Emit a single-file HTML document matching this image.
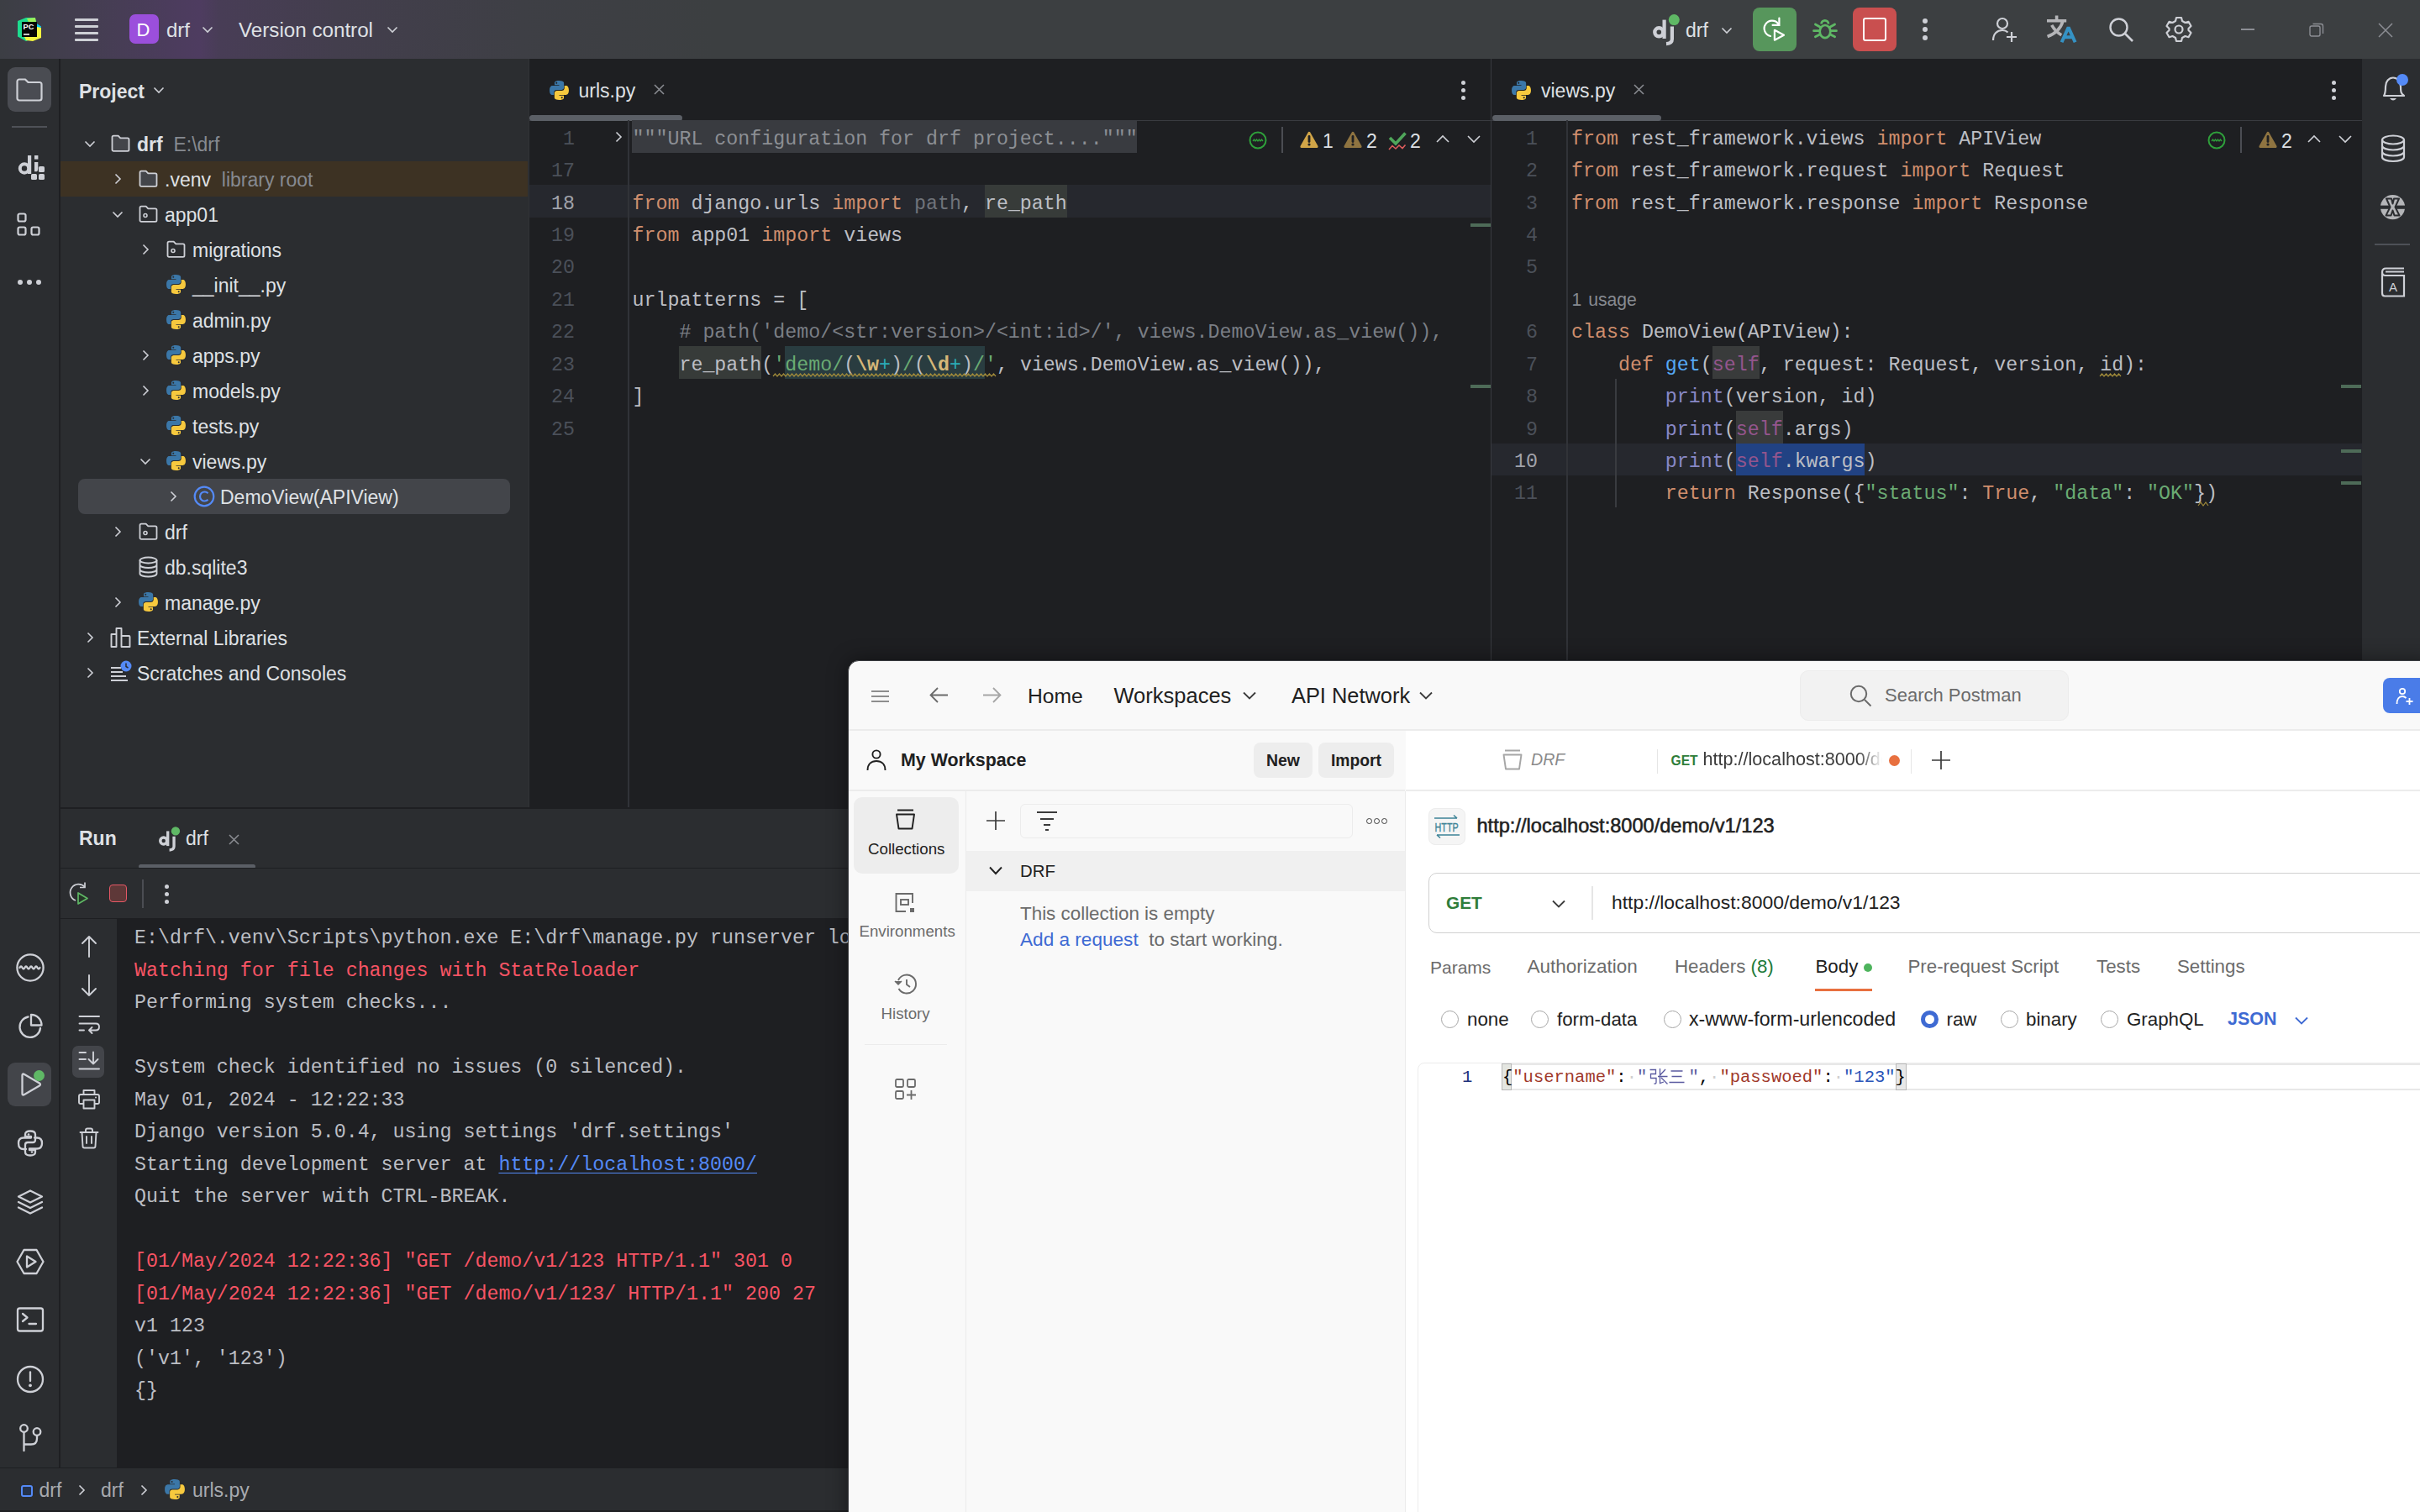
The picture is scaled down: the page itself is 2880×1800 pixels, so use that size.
<!DOCTYPE html><html><head><meta charset="utf-8"><style>
*{box-sizing:border-box;margin:0;padding:0}
html,body{width:2880px;height:1800px;overflow:hidden}
body{position:relative;background:#2b2d30;font-family:"Liberation Sans",sans-serif;color:#dfe1e5}
.a{position:absolute}
.t{position:absolute;white-space:pre;line-height:1}
.m{font-family:"Liberation Mono",monospace}
svg{position:absolute;overflow:visible}
.k{color:#cf8e6d}
.s{color:#6aab73}
.c{color:#7a7e85}
.n{color:#2aacb8}
.f{color:#56a8f5}
.b{color:#8888c6}
.sf{color:#94558d}
.g{color:#6f737a}
</style></head><body><svg width="0" height="0" style="position:absolute">
<defs>
<symbol id="py" viewBox="0 0 24 24">
<path fill="#3b77a8" d="M11.9 1C6.4 1 6.7 3.4 6.7 3.4V5.9h5.3v.8H4.6S1 6.3 1 11.9s3.1 5.4 3.1 5.4h1.9v-2.6s-.1-3.1 3.1-3.1h5.3s3 .05 3-2.9V3.8S17.9 1 11.9 1zM8.9 2.7a.95.95 0 1 1 0 1.9.95.95 0 0 1 0-1.9z"/>
<path fill="#f7c93e" d="M12.1 23c5.5 0 5.2-2.4 5.2-2.4v-2.5h-5.3v-.8h7.4s3.6.4 3.6-5.2-3.1-5.4-3.1-5.4h-1.9v2.6s.1 3.1-3.1 3.1H9.6s-3-.05-3 2.9v4.9S6.1 23 12.1 23zm3-1.7a.95.95 0 1 1 0-1.9.95.95 0 0 1 0 1.9z"/>
</symbol>
<symbol id="folder" viewBox="0 0 25 22">
<path d="M2.5 3.2c0-.9.7-1.6 1.6-1.6h5.6l2.6 2.8h8.6c.9 0 1.6.7 1.6 1.6v12.2c0 .9-.7 1.6-1.6 1.6H4.1c-.9 0-1.6-.7-1.6-1.6z" fill="#43454a" stroke="#ced0d6" stroke-width="1.8" stroke-linejoin="round"/>
</symbol>
<symbol id="pkg" viewBox="0 0 25 22">
<path d="M2.5 3.2c0-.9.7-1.6 1.6-1.6h5.6l2.6 2.8h8.6c.9 0 1.6.7 1.6 1.6v12.2c0 .9-.7 1.6-1.6 1.6H4.1c-.9 0-1.6-.7-1.6-1.6z" fill="none" stroke="#ced0d6" stroke-width="1.8" stroke-linejoin="round"/>
<circle cx="9" cy="12.5" r="2" fill="none" stroke="#ced0d6" stroke-width="1.6"/>
</symbol>
<symbol id="chr" viewBox="0 0 16 16"><path d="M5.5 2.5l5.5 5.5-5.5 5.5" fill="none" stroke="#ced0d6" stroke-width="1.6"/></symbol>
<symbol id="chd" viewBox="0 0 16 16"><path d="M2.5 5.5l5.5 5.5 5.5-5.5" fill="none" stroke="#ced0d6" stroke-width="1.6"/></symbol>
</defs></svg><div class="a" style="left:0px;top:0px;width:2880px;height:70px;background:linear-gradient(90deg,#3c3e44 0px,#433e4f 90px,#4b3c5c 200px,#4e3c60 238px,#483d56 262px,#433e4d 400px,#3e3f45 620px,#3c3f41 850px);"></div><svg class="a" style="left:15px;top:15px;width:40px;height:40px" viewBox="0 0 40 40">
<path d="M6 10 L16 6 L26.5 6 L28.5 12 L28.5 29 L16 34 L6 28.5 Z" fill="#1ddc8f"/>
<path d="M17 7 L27 6 L28.5 14 L20 14 Z" fill="#9cf05a"/>
<path d="M27 12 L34 16.5 L31 25 L27 25 Z" fill="#08c9f5"/>
<path d="M14 29 L29 17 L34 18 L34 30 L24 34 L16 33 Z" fill="#f2f53f"/>
<rect x="11" y="11" width="18" height="18" fill="#050505"/>
<text x="12.6" y="20.3" font-family="Liberation Sans" font-weight="bold" font-size="9.2" fill="#fff">PC</text>
<rect x="13" y="25" width="7" height="1.8" fill="#ddd"/>
</svg><div class="a" style="left:89px;top:22px;width:28px;height:2.6px;background:#ced0d6;border-radius:1px"></div><div class="a" style="left:89px;top:30px;width:28px;height:2.6px;background:#ced0d6;border-radius:1px"></div><div class="a" style="left:89px;top:38px;width:28px;height:2.6px;background:#ced0d6;border-radius:1px"></div><div class="a" style="left:89px;top:46px;width:28px;height:2.6px;background:#ced0d6;border-radius:1px"></div><div class="a" style="left:154px;top:17px;width:35px;height:35px;background:#9b4fdc;border-radius:7px"></div><div class="t" style="left:162.5px;top:25.38px;font-size:22px;color:#ffffff;">D</div><div class="t" style="left:198px;top:23.68px;font-size:24px;color:#dfe1e5;">drf</div><svg class="a" style="left:239px;top:27px;width:16px;height:16px" ><use href="#chd"/></svg><div class="t" style="left:284px;top:23.51px;font-size:24.2px;color:#dfe1e5;">Version control</div><svg class="a" style="left:459px;top:27px;width:16px;height:16px" ><use href="#chd"/></svg><svg class="a" style="left:1962px;top:18px;width:38.0px;height:38.0px" viewBox="0 0 38 38">
<circle cx="12.3" cy="20.3" r="5" fill="none" stroke="#ced0d6" stroke-width="4.4"/>
<rect x="16.5" y="5.6" width="4.2" height="22.4" fill="#ced0d6"/>
<path d="M27.9 13.5 V28.5 Q27.9 33.8 21 34.2" fill="none" stroke="#ced0d6" stroke-width="4.2"/>
<circle cx="30.3" cy="5.6" r="6.5" fill="#5fb865"/>
</svg><div class="t" style="left:2006px;top:24.53px;font-size:23px;color:#dfe1e5;">drf</div><svg class="a" style="left:2047px;top:28px;width:16px;height:16px" ><use href="#chd"/></svg><div class="a" style="left:2086px;top:9px;width:52px;height:52px;background:#57965c;border-radius:8px"></div><svg class="a" style="left:2097px;top:20px;width:30px;height:30px" viewBox="0 0 30 30">
<path d="M19.5 8.5 A9.3 9.3 0 1 0 10 23" fill="none" stroke="#fff" stroke-width="2.2" stroke-linecap="round"/>
<path d="M20.4 1.5 V9.9 H12.6" fill="none" stroke="#fff" stroke-width="2.2" stroke-linecap="round"/>
<path d="M14.9 15.8 V27.7 L26 21.8 Z" fill="none" stroke="#fff" stroke-width="2.2" stroke-linejoin="round"/>
</svg><svg class="a" style="left:2157px;top:20px;width:30px;height:30px" viewBox="0 0 30 30">
<path d="M10.6 8.5 A4.2 4.2 0 0 1 19 8.5" fill="none" stroke="#5fb865" stroke-width="2.7"/>
<ellipse cx="15" cy="17.6" rx="6.3" ry="7.6" fill="none" stroke="#5fb865" stroke-width="2.7"/>
<path d="M3.4 9 L8.8 12 M26.6 9 L21.2 12 M1.5 16.7 H8.5 M28.5 16.7 H21.5 M3.4 23.8 L8.8 21 M26.6 23.8 L21.2 21" stroke="#5fb865" stroke-width="2.7" stroke-linecap="round" fill="none"/>
</svg><div class="a" style="left:2205px;top:9px;width:52px;height:52px;background:#c94f4f;border-radius:8px"></div><div class="a" style="left:2217px;top:21px;width:28px;height:28px;background:transparent;border:2.6px solid #fff;border-radius:3px"></div><div class="a" style="left:2288px;top:22px;width:6px;height:6px;border-radius:50%;background:#ced0d6"></div><div class="a" style="left:2288px;top:32px;width:6px;height:6px;border-radius:50%;background:#ced0d6"></div><div class="a" style="left:2288px;top:42px;width:6px;height:6px;border-radius:50%;background:#ced0d6"></div><svg class="a" style="left:2370px;top:19px;width:32px;height:32px" viewBox="0 0 32 32">
<circle cx="13" cy="9" r="6" fill="none" stroke="#ced0d6" stroke-width="2.2"/>
<path d="M2 29 C2 21 7 17 13 17 C16 17 18 18 19.5 19.5" fill="none" stroke="#ced0d6" stroke-width="2.2"/>
<path d="M24 19 V31 M18 25 H30" stroke="#ced0d6" stroke-width="2.2"/>
</svg><svg class="a" style="left:2435px;top:18px;width:38px;height:34px" viewBox="0 0 38 34">
<path d="M12.6 0.5 V7 M1 6.8 H24.2 M20 7 Q16.5 20 1.6 25.5 M6.7 11.9 Q11 19.5 18.3 23.8" fill="none" stroke="#b4b5b8" stroke-width="3.6"/>
<path d="M18.6 32.3 L26.6 14.6 L34.6 32.3 M21.5 26.2 H31.6" fill="none" stroke="#3592c4" stroke-width="4" stroke-linejoin="bevel"/>
</svg><svg class="a" style="left:2509px;top:20px;width:32px;height:32px" viewBox="0 0 32 32">
<circle cx="12.5" cy="12.5" r="10" fill="none" stroke="#ced0d6" stroke-width="2.4"/>
<path d="M20 20 L29 29" stroke="#ced0d6" stroke-width="2.6"/>
</svg><svg class="a" style="left:2577px;top:19px;width:32px;height:32px" viewBox="0 0 32 32">
<path d="M13 2 H19 L20 6 L23.5 8 L27.5 6.8 L30.5 12 L27.5 15 V17 L30.5 20 L27.5 25.2 L23.5 24 L20 26 L19 30 H13 L12 26 L8.5 24 L4.5 25.2 L1.5 20 L4.5 17 V15 L1.5 12 L4.5 6.8 L8.5 8 L12 6 Z" fill="none" stroke="#ced0d6" stroke-width="2.2" stroke-linejoin="round"/>
<circle cx="16" cy="16" r="4.5" fill="none" stroke="#ced0d6" stroke-width="2.2"/>
</svg><div class="a" style="left:2667px;top:34px;width:16px;height:1.5px;background:#8c8e94;"></div><svg class="a" style="left:2748px;top:27px;width:18px;height:18px" viewBox="0 0 18 18">
<rect x="1" y="4" width="12" height="12" rx="2" fill="none" stroke="#8c8e94" stroke-width="1.4"/>
<path d="M4.5 1.5 H14 Q16.5 1.5 16.5 4 V13" fill="none" stroke="#8c8e94" stroke-width="1.4"/>
</svg><svg class="a" style="left:2830px;top:27px;width:18px;height:18px" viewBox="0 0 18 18">
<path d="M1 1 L17 17 M17 1 L1 17" stroke="#8c8e94" stroke-width="1.5"/></svg><div class="a" style="left:0px;top:70px;width:70px;height:1677px;background:#2b2d30;"></div><div class="a" style="left:70px;top:70px;width:2px;height:1677px;background:#1e1f22;"></div><div class="a" style="left:9px;top:80px;width:52px;height:53px;background:#4a4c52;border-radius:9px"></div><svg class="a" style="left:19px;top:93px;width:32px;height:28px" viewBox="0 0 32 28">
<path d="M1.5 4 C1.5 2.5 2.5 1.5 4 1.5 H11 L14.5 5 H28 C29.5 5 30.5 6 30.5 7.5 V24 C30.5 25.5 29.5 26.5 28 26.5 H4 C2.5 26.5 1.5 25.5 1.5 24 Z" fill="none" stroke="#ced0d6" stroke-width="2.2" stroke-linejoin="round"/>
</svg><div class="a" style="left:14px;top:150px;width:42px;height:2px;background:#4e5157;"></div><svg class="a" style="left:20px;top:180px;width:36px;height:36px" viewBox="0 0 36 36">
<circle cx="9" cy="20.5" r="5.2" fill="none" stroke="#ced0d6" stroke-width="4"/>
<rect x="13" y="5" width="4.2" height="22" fill="#ced0d6"/>
<rect x="21" y="5" width="4.4" height="4.6" fill="#ced0d6"/>
<path d="M21 13 H25.3 V20 Q25 24.3 23.5 24.3 H21 Z" fill="#ced0d6"/>
<rect x="26" y="18" width="7" height="7" rx="1.6" fill="#ced0d6"/>
<rect x="17" y="27" width="7" height="7" rx="1.6" fill="#ced0d6"/>
<rect x="26" y="27" width="7" height="7" rx="1.6" fill="#ced0d6"/>
</svg><svg class="a" style="left:20px;top:253px;width:32px;height:32px" viewBox="0 0 32 32">
<rect x="1.5" y="1.5" width="9" height="9" rx="2" fill="none" stroke="#ced0d6" stroke-width="2.2"/>
<rect x="1.5" y="17.5" width="9" height="9" rx="2" fill="none" stroke="#ced0d6" stroke-width="2.2"/>
<rect x="17.5" y="17.5" width="9" height="9" rx="2" fill="none" stroke="#ced0d6" stroke-width="2.2"/>
</svg><div class="a" style="left:21px;top:333px;width:6px;height:6px;border-radius:50%;background:#ced0d6"></div><div class="a" style="left:32px;top:333px;width:6px;height:6px;border-radius:50%;background:#ced0d6"></div><div class="a" style="left:43px;top:333px;width:6px;height:6px;border-radius:50%;background:#ced0d6"></div><svg class="a" style="left:18.5px;top:1134.5px;width:34px;height:34px" viewBox="0 0 34 34"><circle cx="17" cy="17" r="15.6" fill="none" stroke="#ced0d6" stroke-width="2.3" stroke-linecap="round" stroke-linejoin="round"/><path d="M4.5 17 q1.5 -3 3 0 t3 0 t3 0 t3 0 t3 0 t3 0 t3 0 t3 0" fill="none" stroke="#ced0d6" stroke-width="2.3" stroke-linecap="round" stroke-linejoin="round" stroke-width="1.9"/></svg><svg class="a" style="left:18.5px;top:1204.5px;width:34px;height:34px" viewBox="0 0 34 34"><path d="M14.5 5.5 A12.3 12.3 0 1 0 29 19" fill="none" stroke="#ced0d6" stroke-width="2.3" stroke-linecap="round" stroke-linejoin="round"/><path d="M18 3 A12.5 12.5 0 0 1 30.5 15.5 H18 Z" fill="none" stroke="#ced0d6" stroke-width="2.3" stroke-linecap="round" stroke-linejoin="round"/></svg><div class="a" style="left:9px;top:1265px;width:52px;height:52px;background:#43454a;border-radius:9px"></div><svg class="a" style="left:18.5px;top:1274px;width:34px;height:34px" viewBox="0 0 34 34"><path d="M7.5 6 Q7.5 3.5 10 5 L28 15.5 Q30 17 28 18.5 L10 29 Q7.5 30.5 7.5 28 Z" fill="none" stroke="#ced0d6" stroke-width="2.3" stroke-linecap="round" stroke-linejoin="round"/></svg><div class="a" style="left:40px;top:1273.5px;width:13px;height:13px;border-radius:50%;background:#5fb865;border:0"></div><svg class="a" style="left:18.5px;top:1344px;width:34px;height:34px" viewBox="0 0 34 34"><path d="M12 24 H9 Q3 24 3 17 Q3 10.5 9 10.5 H18 V9 H11 V6.5 Q11 2.5 17 2.5 Q23 2.5 23 6.5 V13 Q23 16 20 16 H14 Q11 16 11 19 V27.5 Q11 31.5 17 31.5 Q23 31.5 23 27.5 V25 H16 V23.5 H25 Q31 23.5 31 17 Q31 10.5 25 10.5 H22" fill="none" stroke="#ced0d6" stroke-width="2.3" stroke-linecap="round" stroke-linejoin="round" stroke-width="2.1"/><circle cx="15" cy="6.5" r="1.3" fill="#ced0d6"/><circle cx="19" cy="27.5" r="1.3" fill="#ced0d6"/></svg><svg class="a" style="left:18.5px;top:1414px;width:34px;height:34px" viewBox="0 0 34 34"><path d="M17 3.5 L31 10.5 L17 17.5 L3 10.5 Z" fill="none" stroke="#ced0d6" stroke-width="2.3" stroke-linecap="round" stroke-linejoin="round"/><path d="M3 17 L17 24 L31 17 M3 23.5 L17 30.5 L31 23.5" fill="none" stroke="#ced0d6" stroke-width="2.3" stroke-linecap="round" stroke-linejoin="round"/></svg><svg class="a" style="left:18.5px;top:1484.5px;width:34px;height:34px" viewBox="0 0 34 34"><path d="M9.5 3 H24.5 L32.5 17 L24.5 31 H9.5 L1.5 17 Z" fill="none" stroke="#ced0d6" stroke-width="2.3" stroke-linecap="round" stroke-linejoin="round"/><path d="M13 10.5 V23.5 L23.5 17 Z" fill="none" stroke="#ced0d6" stroke-width="2.3" stroke-linecap="round" stroke-linejoin="round"/></svg><svg class="a" style="left:18.5px;top:1554px;width:34px;height:34px" viewBox="0 0 34 34"><rect x="2" y="3.5" width="30" height="27" rx="2.5" fill="none" stroke="#ced0d6" stroke-width="2.3" stroke-linecap="round" stroke-linejoin="round"/><path d="M8 10 L13.5 14.5 L8 19 M15.5 22 H24" fill="none" stroke="#ced0d6" stroke-width="2.3" stroke-linecap="round" stroke-linejoin="round"/></svg><svg class="a" style="left:18.5px;top:1624.5px;width:34px;height:34px" viewBox="0 0 34 34"><circle cx="17" cy="17" r="15" fill="none" stroke="#ced0d6" stroke-width="2.3" stroke-linecap="round" stroke-linejoin="round"/><path d="M17 8.5 V19" fill="none" stroke="#ced0d6" stroke-width="2.3" stroke-linecap="round" stroke-linejoin="round" stroke-width="3"/><circle cx="17" cy="24.3" r="1.9" fill="#ced0d6"/></svg><svg class="a" style="left:18.5px;top:1694.5px;width:34px;height:34px" viewBox="0 0 34 34"><circle cx="9.5" cy="5.5" r="4.3" fill="none" stroke="#ced0d6" stroke-width="2.3" stroke-linecap="round" stroke-linejoin="round"/><circle cx="25" cy="9.5" r="4.3" fill="none" stroke="#ced0d6" stroke-width="2.3" stroke-linecap="round" stroke-linejoin="round"/><path d="M9.5 10 V32 M9.5 24.5 H18 Q25 24.5 25 17.5 V14" fill="none" stroke="#ced0d6" stroke-width="2.3" stroke-linecap="round" stroke-linejoin="round"/></svg><div class="a" style="left:72px;top:70px;width:557px;height:891px;background:#2b2d30;"></div><div class="a" style="left:629px;top:70px;width:1px;height:891px;background:#313336;"></div><div class="t" style="left:94px;top:97.53px;font-size:23px;color:#dfe1e5;font-weight:bold;">Project</div><svg class="a" style="left:181px;top:99px;width:16px;height:16px" ><use href="#chd"/></svg><svg class="a" style="left:99px;top:163px;width:16px;height:16px" ><use href="#chd"/></svg><svg class="a" style="left:131px;top:160px;width:25px;height:22px" ><use href="#folder"/></svg><div class="t" style="left:163px;top:160.53px;font-size:23px;color:#dfe1e5;"><b>drf</b>  <span style="color:#868a91">E:\drf</span></div><div class="a" style="left:72px;top:192px;width:556px;height:42px;background:#3d3223;"></div><svg class="a" style="left:132px;top:205px;width:16px;height:16px" ><use href="#chr"/></svg><svg class="a" style="left:164px;top:202px;width:25px;height:22px" ><use href="#folder"/></svg><div class="t" style="left:196px;top:202.53px;font-size:23px;color:#dfe1e5;">.venv  <span style="color:#868a91">library root</span></div><svg class="a" style="left:132px;top:247px;width:16px;height:16px" ><use href="#chd"/></svg><svg class="a" style="left:164px;top:244px;width:25px;height:22px" ><use href="#pkg"/></svg><div class="t" style="left:196px;top:244.53px;font-size:23px;color:#dfe1e5;">app01</div><svg class="a" style="left:165px;top:289px;width:16px;height:16px" ><use href="#chr"/></svg><svg class="a" style="left:197px;top:286px;width:25px;height:22px" ><use href="#pkg"/></svg><div class="t" style="left:229px;top:286.53px;font-size:23px;color:#dfe1e5;">migrations</div><svg class="a" style="left:197px;top:326px;width:25px;height:25px" ><use href="#py"/></svg><div class="t" style="left:229px;top:328.53px;font-size:23px;color:#dfe1e5;">__init__.py</div><svg class="a" style="left:197px;top:368px;width:25px;height:25px" ><use href="#py"/></svg><div class="t" style="left:229px;top:370.53px;font-size:23px;color:#dfe1e5;">admin.py</div><svg class="a" style="left:165px;top:415px;width:16px;height:16px" ><use href="#chr"/></svg><svg class="a" style="left:197px;top:410px;width:25px;height:25px" ><use href="#py"/></svg><div class="t" style="left:229px;top:412.53px;font-size:23px;color:#dfe1e5;">apps.py</div><svg class="a" style="left:165px;top:457px;width:16px;height:16px" ><use href="#chr"/></svg><svg class="a" style="left:197px;top:452px;width:25px;height:25px" ><use href="#py"/></svg><div class="t" style="left:229px;top:454.53px;font-size:23px;color:#dfe1e5;">models.py</div><svg class="a" style="left:197px;top:494px;width:25px;height:25px" ><use href="#py"/></svg><div class="t" style="left:229px;top:496.53px;font-size:23px;color:#dfe1e5;">tests.py</div><svg class="a" style="left:165px;top:541px;width:16px;height:16px" ><use href="#chd"/></svg><svg class="a" style="left:197px;top:536px;width:25px;height:25px" ><use href="#py"/></svg><div class="t" style="left:229px;top:538.53px;font-size:23px;color:#dfe1e5;">views.py</div><div class="a" style="left:93px;top:570px;width:514px;height:42px;background:#43454a;border-radius:8px"></div><svg class="a" style="left:198px;top:583px;width:16px;height:16px" ><use href="#chr"/></svg><svg class="a" style="left:230px;top:578px;width:26px;height:26px" viewBox="0 0 26 26"><circle cx="13" cy="13" r="11.3" fill="none" stroke="#548af7" stroke-width="2.2"/><path d="M17.5 9.2 A5.5 5.5 0 1 0 17.5 16.8" fill="none" stroke="#548af7" stroke-width="2.2"/></svg><div class="t" style="left:262px;top:580.53px;font-size:23px;color:#dfe1e5;">DemoView(APIView)</div><svg class="a" style="left:132px;top:625px;width:16px;height:16px" ><use href="#chr"/></svg><svg class="a" style="left:164px;top:622px;width:25px;height:22px" ><use href="#pkg"/></svg><div class="t" style="left:196px;top:622.53px;font-size:23px;color:#dfe1e5;">drf</div><svg class="a" style="left:164px;top:662px;width:25px;height:26px" viewBox="0 0 25 26"><ellipse cx="12.5" cy="5" rx="10" ry="3.5" fill="none" stroke="#ced0d6" stroke-width="1.9"/><path d="M2.5 5 V21 C2.5 23 7 24.5 12.5 24.5 S22.5 23 22.5 21 V5 M2.5 10.5 C2.5 12.5 7 14 12.5 14 S22.5 12.5 22.5 10.5 M2.5 16 C2.5 18 7 19.5 12.5 19.5 S22.5 18 22.5 16" fill="none" stroke="#ced0d6" stroke-width="1.9"/></svg><div class="t" style="left:196px;top:664.53px;font-size:23px;color:#dfe1e5;">db.sqlite3</div><svg class="a" style="left:132px;top:709px;width:16px;height:16px" ><use href="#chr"/></svg><svg class="a" style="left:164px;top:704px;width:25px;height:25px" ><use href="#py"/></svg><div class="t" style="left:196px;top:706.53px;font-size:23px;color:#dfe1e5;">manage.py</div><svg class="a" style="left:99px;top:751px;width:16px;height:16px" ><use href="#chr"/></svg><svg class="a" style="left:131px;top:746px;width:25px;height:26px" viewBox="0 0 25 26"><path d="M1.5 24 V9 H7.5 V24 Z M7.5 24 V2 H13.5 V24 M13.5 24 V11 H22.5 Q23.5 11 23.5 12 V24 Z" fill="none" stroke="#ced0d6" stroke-width="1.9" stroke-linejoin="round"/></svg><div class="t" style="left:163px;top:748.53px;font-size:23px;color:#dfe1e5;">External Libraries</div><svg class="a" style="left:99px;top:793px;width:16px;height:16px" ><use href="#chr"/></svg><svg class="a" style="left:131px;top:786px;width:27px;height:28px" viewBox="0 0 27 28"><path d="M1 9 H13 M1 14 H15 M1 19 H19 M1 24 H21" stroke="#ced0d6" stroke-width="1.9"/><circle cx="19" cy="7" r="6.5" fill="#548af7"/><path d="M19 3.5 V7.5 L21.5 9" stroke="#2b2d30" stroke-width="1.5" fill="none"/></svg><div class="t" style="left:163px;top:790.53px;font-size:23px;color:#dfe1e5;">Scratches and Consoles</div><div class="a" style="left:630px;top:70px;width:1144px;height:891px;background:#1e1f22;"></div><div class="a" style="left:1774px;top:70px;width:1px;height:891px;background:#393b40;"></div><div class="a" style="left:630px;top:143px;width:1144px;height:1px;background:#393b40;"></div><svg class="a" style="left:653px;top:95px;width:25px;height:25px" ><use href="#py"/></svg><div class="t" style="left:688.5px;top:96.53px;font-size:23px;color:#dfe1e5;">urls.py</div><svg class="a" style="left:778px;top:100px;width:13px;height:13px" viewBox="0 0 13 13"><path d="M1 1 L12 12 M12 1 L1 12" stroke="#8c8e94" stroke-width="1.5"/></svg><div class="a" style="left:630px;top:137px;width:182px;height:7px;background:#5b5f66;border-radius:4px"></div><div class="a" style="left:1738.5px;top:95.5px;width:5px;height:5px;border-radius:50%;background:#ced0d6"></div><div class="a" style="left:1738.5px;top:104.5px;width:5px;height:5px;border-radius:50%;background:#ced0d6"></div><div class="a" style="left:1738.5px;top:113.5px;width:5px;height:5px;border-radius:50%;background:#ced0d6"></div><div class="a" style="left:630px;top:220.07999999999998px;width:1144px;height:38.44px;background:#26282e;"></div><div class="a" style="left:752px;top:143.2px;width:601px;height:38.44px;background:#393b40;"></div><div class="t m" style="left:670.02px;top:154.64px;font-size:23.3px;color:#4b5059;">1</div><div class="t m" style="left:656.04px;top:193.08px;font-size:23.3px;color:#4b5059;">17</div><div class="t m" style="left:656.04px;top:231.52px;font-size:23.3px;color:#a1a3ab;">18</div><div class="t m" style="left:656.04px;top:269.96px;font-size:23.3px;color:#4b5059;">19</div><div class="t m" style="left:656.04px;top:308.40px;font-size:23.3px;color:#4b5059;">20</div><div class="t m" style="left:656.04px;top:346.84px;font-size:23.3px;color:#4b5059;">21</div><div class="t m" style="left:656.04px;top:385.28px;font-size:23.3px;color:#4b5059;">22</div><div class="t m" style="left:656.04px;top:423.72px;font-size:23.3px;color:#4b5059;">23</div><div class="t m" style="left:656.04px;top:462.16px;font-size:23.3px;color:#4b5059;">24</div><div class="t m" style="left:656.04px;top:500.60px;font-size:23.3px;color:#4b5059;">25</div><div class="a" style="left:747px;top:143px;width:2px;height:818px;background:#313338;"></div><svg class="a" style="left:728px;top:155.2px;width:16px;height:16px" ><use href="#chr"/></svg><div class="a" style="left:1171.9px;top:220.08px;width:97.86px;height:38.44px;background:#373b39;"></div><div class="a" style="left:808.42px;top:412.28px;width:97.86px;height:38.44px;background:#373b39;"></div><div class="a" style="left:934.24px;top:412.28px;width:237.66px;height:38.44px;background:#293c40;"></div><div class="t m" style="left:752.5px;top:154.64px;font-size:23.3px;color:#bcbec4;"><span style="color:#8c8f94">"""URL configuration for drf project...."""</span></div><div class="t m" style="left:752.5px;top:231.52px;font-size:23.3px;color:#bcbec4;"><span class="k">from</span> django.urls <span class="k">import</span> <span class="g">path</span>, re_path</div><div class="t m" style="left:752.5px;top:269.96px;font-size:23.3px;color:#bcbec4;"><span class="k">from</span> app01 <span class="k">import</span> views</div><div class="t m" style="left:752.5px;top:346.84px;font-size:23.3px;color:#bcbec4;">urlpatterns = [</div><div class="t m" style="left:752.5px;top:385.28px;font-size:23.3px;color:#bcbec4;">    <span class="c"># path('demo/&lt;str:version&gt;/&lt;int:id&gt;/', views.DemoView.as_view()),</span></div><div class="t m" style="left:752.5px;top:423.72px;font-size:23.3px;color:#bcbec4;">    re_path(<span class="s">'<span>demo/<span style="color:#bcbec4">(</span><span style="color:#d5b778;font-weight:bold">\w</span><span class="n">+</span><span style="color:#bcbec4">)</span>/<span style="color:#bcbec4">(</span><span style="color:#d5b778;font-weight:bold">\d</span><span class="n">+</span><span style="color:#bcbec4">)</span>/</span>'</span>, views.DemoView.as_view()),</div><div class="t m" style="left:752.5px;top:462.16px;font-size:23.3px;color:#bcbec4;">]</div><svg class="a" style="left:920px;top:444.28px;width:265px;height:6px" viewBox="0 0 265 6" preserveAspectRatio="none"><path d="M0 4 L2.5 1 L5 4 L7.5 1 L10 4 L12.5 1 L15 4 L17.5 1 L20 4 L22.5 1 L25 4 L27.5 1 L30 4 L32.5 1 L35 4 L37.5 1 L40 4 L42.5 1 L45 4 L47.5 1 L50 4 L52.5 1 L55 4 L57.5 1 L60 4 L62.5 1 L65 4 L67.5 1 L70 4 L72.5 1 L75 4 L77.5 1 L80 4 L82.5 1 L85 4 L87.5 1 L90 4 L92.5 1 L95 4 L97.5 1 L100 4 L102.5 1 L105 4 L107.5 1 L110 4 L112.5 1 L115 4 L117.5 1 L120 4 L122.5 1 L125 4 L127.5 1 L130 4 L132.5 1 L135 4 L137.5 1 L140 4 L142.5 1 L145 4 L147.5 1 L150 4 L152.5 1 L155 4 L157.5 1 L160 4 L162.5 1 L165 4 L167.5 1 L170 4 L172.5 1 L175 4 L177.5 1 L180 4 L182.5 1 L185 4 L187.5 1 L190 4 L192.5 1 L195 4 L197.5 1 L200 4 L202.5 1 L205 4 L207.5 1 L210 4 L212.5 1 L215 4 L217.5 1 L220 4 L222.5 1 L225 4 L227.5 1 L230 4 L232.5 1 L235 4 L237.5 1 L240 4 L242.5 1 L245 4 L247.5 1 L250 4 L252.5 1 L255 4 L257.5 1 L260 4 L262.5 1 L265 4" fill="none" stroke="#a08a3a" stroke-width="1.2"/></svg><div class="a" style="left:1750px;top:266px;width:24px;height:4px;background:#4e6b58;"></div><div class="a" style="left:1750px;top:458px;width:24px;height:4px;background:#4e6b58;"></div><svg class="a" style="left:1486px;top:156px;width:22px;height:22px" viewBox="0 0 22 22"><circle cx="11" cy="11" r="9.5" fill="none" stroke="#2fa03b" stroke-width="2"/><path d="M5 12 l1.5 -2 l1.5 2 l1.5 -2 l1.5 2 l1.5 -2 l1.5 2 l1.5 -2 l1.5 2" fill="none" stroke="#2fa03b" stroke-width="1.3"/></svg><div class="a" style="left:1525px;top:151px;width:2px;height:31px;background:#4b4d53;"></div><svg class="a" style="left:1547px;top:156px;width:22px;height:21px" viewBox="0 0 22 21"><path d="M11 2.5 L20 18.5 H2 Z" fill="#d1a548" stroke="#d1a548" stroke-width="3.2" stroke-linejoin="round"/><path d="M11 6.5 V12.5" stroke="#1e1f22" stroke-width="2.8" stroke-linecap="round"/><circle cx="11" cy="16" r="1.6" fill="#1e1f22"/></svg><div class="t" style="left:1574px;top:156.53px;font-size:23px;color:#dfe1e5;">1</div><svg class="a" style="left:1599px;top:156px;width:22px;height:21px" viewBox="0 0 22 21"><path d="M11 2.5 L20 18.5 H2 Z" fill="#8f7441" stroke="#8f7441" stroke-width="3.2" stroke-linejoin="round"/><path d="M11 6.5 V12.5" stroke="#1e1f22" stroke-width="2.8" stroke-linecap="round"/><circle cx="11" cy="16" r="1.6" fill="#1e1f22"/></svg><div class="t" style="left:1626px;top:156.53px;font-size:23px;color:#dfe1e5;">2</div><svg class="a" style="left:1652px;top:156px;width:22px;height:22px" viewBox="0 0 22 22"><path d="M2 8 L9 15 L20.5 2.5" fill="none" stroke="#4fa65a" stroke-width="3.6"/><path d="M1 22 L5 17.5 L9 21 L13 17 L17 20.5 L20.5 16.5" fill="none" stroke="#db5c5c" stroke-width="1.6"/></svg><div class="t" style="left:1678px;top:156.53px;font-size:23px;color:#dfe1e5;">2</div><svg class="a" style="left:1709px;top:160px;width:16px;height:10px" viewBox="0 0 16 10"><path d="M1 9 L8 2 L15 9" fill="none" stroke="#ced0d6" stroke-width="1.6"/></svg><svg class="a" style="left:1746px;top:161px;width:16px;height:10px" viewBox="0 0 16 10"><path d="M1 1 L8 8 L15 1" fill="none" stroke="#ced0d6" stroke-width="1.6"/></svg><div class="a" style="left:1775px;top:70px;width:1036px;height:891px;background:#1e1f22;"></div><div class="a" style="left:1775px;top:143px;width:1036px;height:1px;background:#393b40;"></div><svg class="a" style="left:1798px;top:95px;width:25px;height:25px" ><use href="#py"/></svg><div class="t" style="left:1834px;top:96.53px;font-size:23px;color:#dfe1e5;">views.py</div><svg class="a" style="left:1944px;top:100px;width:13px;height:13px" viewBox="0 0 13 13"><path d="M1 1 L12 12 M12 1 L1 12" stroke="#8c8e94" stroke-width="1.5"/></svg><div class="a" style="left:1776px;top:137px;width:201px;height:7px;background:#5b5f66;border-radius:4px"></div><div class="a" style="left:2774.5px;top:95.5px;width:5px;height:5px;border-radius:50%;background:#ced0d6"></div><div class="a" style="left:2774.5px;top:104.5px;width:5px;height:5px;border-radius:50%;background:#ced0d6"></div><div class="a" style="left:2774.5px;top:113.5px;width:5px;height:5px;border-radius:50%;background:#ced0d6"></div><div class="a" style="left:1775px;top:527.5999999999999px;width:1036px;height:38.44px;background:#26282e;"></div><div class="t m" style="left:1816.02px;top:154.64px;font-size:23.3px;color:#4b5059;">1</div><div class="t m" style="left:1816.02px;top:193.08px;font-size:23.3px;color:#4b5059;">2</div><div class="t m" style="left:1816.02px;top:231.52px;font-size:23.3px;color:#4b5059;">3</div><div class="t m" style="left:1816.02px;top:269.96px;font-size:23.3px;color:#4b5059;">4</div><div class="t m" style="left:1816.02px;top:308.40px;font-size:23.3px;color:#4b5059;">5</div><div class="t m" style="left:1816.02px;top:385.28px;font-size:23.3px;color:#4b5059;">6</div><div class="t m" style="left:1816.02px;top:423.72px;font-size:23.3px;color:#4b5059;">7</div><div class="t m" style="left:1816.02px;top:462.16px;font-size:23.3px;color:#4b5059;">8</div><div class="t m" style="left:1816.02px;top:500.60px;font-size:23.3px;color:#4b5059;">9</div><div class="t m" style="left:1802.04px;top:539.04px;font-size:23.3px;color:#a1a3ab;">10</div><div class="t m" style="left:1802.04px;top:577.48px;font-size:23.3px;color:#4b5059;">11</div><div class="a" style="left:1864px;top:143px;width:2px;height:818px;background:#313338;"></div><div class="a" style="left:2037.76px;top:412.28px;width:55.92px;height:38.44px;background:#393b3b;"></div><div class="a" style="left:2065.72px;top:489.16px;width:55.92px;height:38.44px;background:#393b3b;"></div><div class="a" style="left:2065.72px;top:527.6px;width:153.78px;height:38.44px;background:#214283;"></div><div class="t m" style="left:1870px;top:154.64px;font-size:23.3px;color:#bcbec4;"><span class="k">from</span> rest_framework.views <span class="k">import</span> APIView</div><div class="t m" style="left:1870px;top:193.08px;font-size:23.3px;color:#bcbec4;"><span class="k">from</span> rest_framework.request <span class="k">import</span> Request</div><div class="t m" style="left:1870px;top:231.52px;font-size:23.3px;color:#bcbec4;"><span class="k">from</span> rest_framework.response <span class="k">import</span> Response</div><div class="t m" style="left:1870px;top:385.28px;font-size:23.3px;color:#bcbec4;"><span class="k">class</span> DemoView(APIView):</div><div class="t m" style="left:1870px;top:423.72px;font-size:23.3px;color:#bcbec4;">    <span class="k">def</span> <span class="f">get</span>(<span class="sf">self</span>, request: Request, version, id):</div><div class="t m" style="left:1870px;top:462.16px;font-size:23.3px;color:#bcbec4;">        <span class="b">print</span>(version, id)</div><div class="t m" style="left:1870px;top:500.60px;font-size:23.3px;color:#bcbec4;">        <span class="b">print</span>(<span class="sf">self</span>.args)</div><div class="t m" style="left:1870px;top:539.04px;font-size:23.3px;color:#bcbec4;">        <span class="b">print</span>(<span class="sf">self</span>.kwargs)</div><div class="t m" style="left:1870px;top:577.48px;font-size:23.3px;color:#bcbec4;">        <span class="k">return</span> Response({<span class="s">"status"</span>: <span class="k">True</span>, <span class="s">"data"</span>: <span class="s">"OK"</span>})</div><div class="t" style="left:1870.5px;top:346.05px;font-size:21.2px;color:#868a91;word-spacing:2px">1 usage</div><div class="a" style="left:1922px;top:450.71999999999997px;width:1.5px;height:153.76px;background:#393b40;"></div><svg class="a" style="left:2499px;top:444.28px;width:28px;height:6px" viewBox="0 0 28 6"><path d="M0 4 L2.5 1 L5 4 L7.5 1 L10 4 L12.5 1 L15 4 L17.5 1 L20 4 L22.5 1 L25 4" fill="none" stroke="#a08a3a" stroke-width="1.2"/></svg><svg class="a" style="left:2616px;top:596.04px;width:12px;height:8px" viewBox="0 0 12 8"><path d="M0 6 L3 2 L6 6 L9 2 L12 6" fill="none" stroke="#a08a3a" stroke-width="1.2"/></svg><div class="a" style="left:2786px;top:458px;width:24px;height:4px;background:#4e6b58;"></div><div class="a" style="left:2786px;top:535px;width:24px;height:4px;background:#4e6b58;"></div><div class="a" style="left:2786px;top:573px;width:24px;height:4px;background:#4e6b58;"></div><svg class="a" style="left:2627px;top:156px;width:22px;height:22px" viewBox="0 0 22 22"><circle cx="11" cy="11" r="9.5" fill="none" stroke="#2fa03b" stroke-width="2"/><path d="M5 12 l1.5 -2 l1.5 2 l1.5 -2 l1.5 2 l1.5 -2 l1.5 2 l1.5 -2 l1.5 2" fill="none" stroke="#2fa03b" stroke-width="1.3"/></svg><div class="a" style="left:2666px;top:151px;width:2px;height:31px;background:#4b4d53;"></div><svg class="a" style="left:2688px;top:156px;width:22px;height:21px" viewBox="0 0 22 21"><path d="M11 2.5 L20 18.5 H2 Z" fill="#8f7441" stroke="#8f7441" stroke-width="3.2" stroke-linejoin="round"/><path d="M11 6.5 V12.5" stroke="#1e1f22" stroke-width="2.8" stroke-linecap="round"/><circle cx="11" cy="16" r="1.6" fill="#1e1f22"/></svg><div class="t" style="left:2715px;top:156.53px;font-size:23px;color:#dfe1e5;">2</div><svg class="a" style="left:2746px;top:160px;width:16px;height:10px" viewBox="0 0 16 10"><path d="M1 9 L8 2 L15 9" fill="none" stroke="#ced0d6" stroke-width="1.6"/></svg><svg class="a" style="left:2783px;top:161px;width:16px;height:10px" viewBox="0 0 16 10"><path d="M1 1 L8 8 L15 1" fill="none" stroke="#ced0d6" stroke-width="1.6"/></svg><div class="a" style="left:2811px;top:70px;width:69px;height:1677px;background:#2b2d30;"></div><svg class="a" style="left:2833px;top:89px;width:30px;height:34px" viewBox="0 0 30 34"><path d="M4 25 C6 22 6 20 6 14 C6 8 10 3.5 15 3.5 C20 3.5 24 8 24 14 C24 20 24 22 28 25 Z" fill="none" stroke="#ced0d6" stroke-width="2.2" stroke-linejoin="round"/><path d="M11 28 Q15 33 19 28" fill="#ced0d6"/></svg><div class="a" style="left:2852px;top:88px;width:14px;height:14px;border-radius:50%;background:#548af7"></div><svg class="a" style="left:2833px;top:160px;width:30px;height:34px" viewBox="0 0 30 34"><ellipse cx="15" cy="6.5" rx="13" ry="5" fill="none" stroke="#ced0d6" stroke-width="2.2"/><path d="M2 6.5 V27 C2 30 8 32 15 32 S28 30 28 27 V6.5 M2 13.5 C2 16.5 8 18.5 15 18.5 S28 16.5 28 13.5 M2 20.5 C2 23.5 8 25.5 15 25.5 S28 23.5 28 20.5" fill="none" stroke="#ced0d6" stroke-width="2.2"/></svg><svg class="a" style="left:2833px;top:232px;width:30px;height:30px" viewBox="0 0 30 30"><circle cx="14.5" cy="14.6" r="14.6" fill="#b4b5b8"/><rect x="-1" y="12.6" width="32" height="4.2" fill="#2b2d30"/><path d="M7 4.5 H13 L14.5 10.5 L16 4.5 H22 L17.5 14.5 L22.5 24.5 H16.5 L14.5 18.5 L12.5 24.5 H6.5 L11.5 14.5 Z" fill="#b4b5b8" stroke="#2b2d30" stroke-width="2" stroke-linejoin="round"/></svg><div class="a" style="left:2826px;top:290px;width:42px;height:2px;background:#4e5157;"></div><svg class="a" style="left:2833px;top:318px;width:30px;height:36px" viewBox="0 0 30 36"><path d="M2 6 C2 3 3.5 1.5 6.5 1.5 H28 M2 6 V31 C2 33 3 34.5 5 34.5 H28 V10 H6 C3.5 10 2 8.5 2 6 M6 5.5 H28" fill="none" stroke="#ced0d6" stroke-width="2.2"/><text x="10" y="29" font-family="Liberation Sans" font-size="15" fill="#ced0d6">A</text></svg><div class="a" style="left:72px;top:961px;width:2739px;height:2px;background:#1e1f22;"></div><div class="a" style="left:72px;top:963px;width:2739px;height:784px;background:#2b2d30;"></div><div class="t" style="left:94px;top:986.53px;font-size:23px;color:#dfe1e5;font-weight:bold;">Run</div><svg class="a" style="left:185.2px;top:984.6px;width:30.020000000000003px;height:30.020000000000003px" viewBox="0 0 38 38">
<circle cx="12.3" cy="20.3" r="5" fill="none" stroke="#ced0d6" stroke-width="4.4"/>
<rect x="16.5" y="5.6" width="4.2" height="22.4" fill="#ced0d6"/>
<path d="M27.9 13.5 V28.5 Q27.9 33.8 21 34.2" fill="none" stroke="#ced0d6" stroke-width="4.2"/>
<circle cx="30.3" cy="5.6" r="6.5" fill="#5fb865"/>
</svg><div class="t" style="left:221px;top:986.53px;font-size:23px;color:#dfe1e5;">drf</div><svg class="a" style="left:272px;top:993px;width:13px;height:13px" viewBox="0 0 13 13"><path d="M1 1 L12 12 M12 1 L1 12" stroke="#8c8e94" stroke-width="1.5"/></svg><div class="a" style="left:165px;top:1029px;width:139px;height:5px;background:#5b5f66;border-radius:3px"></div><div class="a" style="left:72px;top:1033px;width:2739px;height:1px;background:#1e1f22;"></div><svg class="a" style="left:80px;top:1050px;width:30px;height:30px" viewBox="0 0 30 30">
<path d="M21 6 A10 10 0 1 0 10 22" fill="none" stroke="#ced0d6" stroke-width="1.7"/>
<path d="M21 0.5 V6.5 H15" fill="none" stroke="#ced0d6" stroke-width="1.7"/>
<path d="M13 13 V26 L24 19.5 Z" fill="#253627" stroke="#5fb865" stroke-width="1.7" stroke-linejoin="round"/>
</svg><div class="a" style="left:130px;top:1053px;width:21px;height:21px;background:#5e3838;border:1.8px solid #e55765;border-radius:4px"></div><div class="a" style="left:169px;top:1047px;width:1.5px;height:34px;background:#4b4d53;"></div><div class="a" style="left:195.5px;top:1052.5px;width:5px;height:5px;border-radius:50%;background:#ced0d6"></div><div class="a" style="left:195.5px;top:1061.5px;width:5px;height:5px;border-radius:50%;background:#ced0d6"></div><div class="a" style="left:195.5px;top:1070.5px;width:5px;height:5px;border-radius:50%;background:#ced0d6"></div><div class="a" style="left:72px;top:1093px;width:2739px;height:1px;background:#1e1f22;"></div><div class="a" style="left:139px;top:1094px;width:2672px;height:653px;background:#1e1f22;"></div><svg class="a" style="left:91.5px;top:1113px;width:28px;height:28px" viewBox="0 0 28 28"><path d="M14 2 V26 M6 10 L14 2 L22 10" fill="none" stroke="#ced0d6" stroke-width="1.9" stroke-linecap="round" stroke-linejoin="round"/></svg><svg class="a" style="left:91.5px;top:1159px;width:28px;height:28px" viewBox="0 0 28 28"><path d="M14 2 V26 M6 18 L14 26 L22 18" fill="none" stroke="#ced0d6" stroke-width="1.9" stroke-linecap="round" stroke-linejoin="round"/></svg><svg class="a" style="left:91.5px;top:1205px;width:28px;height:28px" viewBox="0 0 28 28"><path d="M2.5 5 H26 M2.5 13.5 H22 Q26 13.5 26 17.5 Q26 21.5 22 21.5 H14 M17.5 18 L14 21.5 L17.5 25 M2.5 21.5 H8" fill="none" stroke="#ced0d6" stroke-width="1.9" stroke-linecap="round" stroke-linejoin="round"/></svg><div class="a" style="left:86px;top:1245px;width:38px;height:38px;background:#43454a;border-radius:7px"></div><svg class="a" style="left:91.5px;top:1250px;width:28px;height:28px" viewBox="0 0 28 28"><path d="M2.5 3 H10 M2.5 11 H10 M2.5 22.5 H26 M19 2.5 V16.5 M13.5 11 L19 16.5 L24.5 11" fill="none" stroke="#ced0d6" stroke-width="1.9" stroke-linecap="round" stroke-linejoin="round"/></svg><svg class="a" style="left:91.5px;top:1295px;width:28px;height:28px" viewBox="0 0 28 28"><path d="M7.5 8 V3 H20.5 V8 M7.5 19 H3.5 Q2 19 2 17.5 V10 Q2 8 4 8 H24 Q26 8 26 10 V17.5 Q26 19 24.5 19 H20.5 M7.5 14.5 H20.5 V24.5 H7.5 Z" fill="none" stroke="#ced0d6" stroke-width="1.9" stroke-linecap="round" stroke-linejoin="round"/><circle cx="22" cy="11.5" r="1" fill="#ced0d6"/></svg><svg class="a" style="left:91.5px;top:1341px;width:28px;height:28px" viewBox="0 0 28 28"><path d="M3.5 7 H24.5 M10 7 V4.5 Q10 2.5 12 2.5 H16 Q18 2.5 18 4.5 V7 M5.5 7 L6.5 23.5 Q6.5 25.5 8.5 25.5 H19.5 Q21.5 25.5 21.5 23.5 L22.5 7 M11 12 V20 M17 12 V20" fill="none" stroke="#ced0d6" stroke-width="1.9" stroke-linecap="round" stroke-linejoin="round"/></svg><div class="t m" style="left:160px;top:1106.14px;font-size:23.3px;color:#bcbec4;">E:\drf\.venv\Scripts\python.exe E:\drf\manage.py runserver localhost:8000</div><div class="t m" style="left:160px;top:1144.64px;font-size:23.3px;color:#f75464;">Watching for file changes with StatReloader</div><div class="t m" style="left:160px;top:1183.14px;font-size:23.3px;color:#bcbec4;">Performing system checks...</div><div class="t m" style="left:160px;top:1260.14px;font-size:23.3px;color:#bcbec4;">System check identified no issues (0 silenced).</div><div class="t m" style="left:160px;top:1298.64px;font-size:23.3px;color:#bcbec4;">May 01, 2024 - 12:22:33</div><div class="t m" style="left:160px;top:1337.14px;font-size:23.3px;color:#bcbec4;">Django version 5.0.4, using settings 'drf.settings'</div><div class="t m" style="left:160px;top:1375.64px;font-size:23.3px;color:#bcbec4;">Starting development server at <span style="color:#548af7;text-decoration:underline;text-decoration-thickness:1.2px;text-underline-offset:3px;text-decoration-skip-ink:none">http://localhost:8000/</span></div><div class="t m" style="left:160px;top:1414.14px;font-size:23.3px;color:#bcbec4;">Quit the server with CTRL-BREAK.</div><div class="t m" style="left:160px;top:1491.14px;font-size:23.3px;color:#f75464;">[01/May/2024 12:22:36] "GET /demo/v1/123 HTTP/1.1" 301 0</div><div class="t m" style="left:160px;top:1529.64px;font-size:23.3px;color:#f75464;">[01/May/2024 12:22:36] "GET /demo/v1/123/ HTTP/1.1" 200 27</div><div class="t m" style="left:160px;top:1568.14px;font-size:23.3px;color:#bcbec4;">v1 123</div><div class="t m" style="left:160px;top:1606.64px;font-size:23.3px;color:#bcbec4;">('v1', '123')</div><div class="t m" style="left:160px;top:1645.14px;font-size:23.3px;color:#bcbec4;">{}</div><div class="a" style="left:0px;top:1747px;width:2880px;height:1px;background:#1e1f22;"></div><div class="a" style="left:0px;top:1748px;width:2880px;height:52px;background:#2b2d30;"></div><div class="a" style="left:25px;top:1768px;width:14px;height:14px;background:#25324a;border:2px solid #548af7;border-radius:3px"></div><div class="t" style="left:46.5px;top:1762.53px;font-size:23px;color:#a8aaaf;">drf</div><svg class="a" style="left:89px;top:1766px;width:16px;height:16px" ><use href="#chr"/></svg><div class="t" style="left:120px;top:1762.53px;font-size:23px;color:#a8aaaf;">drf</div><svg class="a" style="left:163px;top:1766px;width:16px;height:16px" ><use href="#chr"/></svg><svg class="a" style="left:194.5px;top:1760px;width:26px;height:26px" ><use href="#py"/></svg><div class="t" style="left:229px;top:1762.53px;font-size:23px;color:#a8aaaf;">urls.py</div><div class="a" style="left:0px;top:1798px;width:2880px;height:2px;background:#1e1f22;"></div><div class="a" style="left:1009px;top:786px;width:1890px;height:1033px;background:#f9f9f9;border:1px solid #3a3c40;border-radius:13px;box-shadow:0 0 24px rgba(0,0,0,0.45)"></div><svg class="a" style="left:1037px;top:822px;width:22px;height:14px" viewBox="0 0 22 14"><path d="M0 1 H21 M0 7 H21 M0 13 H21" stroke="#6b6b6b" stroke-width="1.5"/></svg><svg class="a" style="left:1106px;top:818px;width:23px;height:19px" viewBox="0 0 23 19"><path d="M22 9.5 H2 M10 1 L1.5 9.5 L10 18" fill="none" stroke="#6b6b6b" stroke-width="1.8"/></svg><svg class="a" style="left:1169px;top:818px;width:23px;height:19px" viewBox="0 0 23 19"><path d="M1 9.5 H21 M13 1 L21.5 9.5 L13 18" fill="none" stroke="#a6a6a6" stroke-width="1.8"/></svg><div class="t" style="left:1223px;top:816.59px;font-size:24.7px;color:#212121;">Home</div><div class="t" style="left:1325.5px;top:815.91px;font-size:25.5px;color:#212121;">Workspaces</div><svg class="a" style="left:1479px;top:823px;width:16px;height:10px" viewBox="0 0 16 10"><path d="M1 1.5 L8 8.5 L15 1.5" fill="none" stroke="#3b3b3b" stroke-width="1.8"/></svg><div class="t" style="left:1537px;top:816.00px;font-size:25.4px;color:#212121;">API Network</div><svg class="a" style="left:1689px;top:823px;width:16px;height:10px" viewBox="0 0 16 10"><path d="M1 1.5 L8 8.5 L15 1.5" fill="none" stroke="#3b3b3b" stroke-width="1.8"/></svg><div class="a" style="left:2142px;top:798px;width:320px;height:60px;background:#f2f2f2;border:1px solid #ececec;border-radius:10px"></div><svg class="a" style="left:2201px;top:815px;width:27px;height:27px" viewBox="0 0 27 27"><circle cx="11" cy="11" r="9.2" fill="none" stroke="#6b6b6b" stroke-width="2"/><path d="M18 18 L25.5 25.5" stroke="#6b6b6b" stroke-width="2"/></svg><div class="t" style="left:2243px;top:816.88px;font-size:22.0px;color:#6b6b6b;">Search Postman</div><div class="a" style="left:2836px;top:807px;width:60px;height:42px;background:#4a7ce8;border-radius:8px"></div><svg class="a" style="left:2851px;top:818px;width:22px;height:22px" viewBox="0 0 22 22"><circle cx="8" cy="5" r="3.2" fill="none" stroke="#fff" stroke-width="1.8"/><path d="M1.5 20 C1.5 14 4 11 8 11 C10 11 11.5 12 12.5 13" fill="none" stroke="#fff" stroke-width="1.8"/><path d="M16.5 13 V21 M12.5 17 H20.5" stroke="#fff" stroke-width="1.8"/></svg><div class="a" style="left:1010px;top:868px;width:1870px;height:2px;background:#ececec;"></div><svg class="a" style="left:1031px;top:892px;width:24px;height:26px" viewBox="0 0 24 26"><circle cx="12" cy="6" r="4.6" fill="none" stroke="#212121" stroke-width="1.9"/><path d="M1.5 25 C1.5 17.5 6 14 12 14 C18 14 22.5 17.5 22.5 25" fill="none" stroke="#212121" stroke-width="1.9"/></svg><div class="t" style="left:1072px;top:895.38px;font-size:21.4px;color:#212121;font-weight:bold;">My Workspace</div><div class="a" style="left:1492px;top:884px;width:70px;height:42px;background:#ededed;border-radius:8px"></div><div class="t" style="left:1507px;top:895.58px;font-size:19.4px;color:#212121;font-weight:bold;">New</div><div class="a" style="left:1569px;top:884px;width:90px;height:42px;background:#ededed;border-radius:8px"></div><div class="t" style="left:1584px;top:895.66px;font-size:19.3px;color:#212121;font-weight:bold;">Import</div><div class="a" style="left:1010px;top:940px;width:662px;height:2px;background:#ececec;"></div><div class="a" style="left:1149px;top:942px;width:1px;height:858px;background:#ececec;"></div><div class="a" style="left:1015.5px;top:949px;width:125px;height:91px;background:#ededed;border-radius:10px"></div><svg class="a" style="left:1065px;top:963px;width:25px;height:25px" viewBox="0 0 25 25"><path d="M3 1.5 H22 M2 6.5 H23 L20.5 23.5 H4.5 Z" fill="none" stroke="#212121" stroke-width="1.9" stroke-linejoin="round"/></svg><div class="t" style="left:1033px;top:1002.17px;font-size:18.7px;color:#212121;">Collections</div><svg class="a" style="left:1065px;top:1062px;width:25px;height:25px" viewBox="0 0 25 25"><path d="M21 13 V2 H1.5 V23 H13" fill="none" stroke="#6b6b6b" stroke-width="1.9"/><rect x="7" y="9" width="9" height="6" fill="none" stroke="#6b6b6b" stroke-width="1.9"/><rect x="18" y="19" width="5" height="5" fill="#6b6b6b"/></svg><div class="t" style="left:1022.5px;top:1100.17px;font-size:18.7px;color:#6b6b6b;">Environments</div><svg class="a" style="left:1064px;top:1159px;width:28px;height:26px" viewBox="0 0 28 26"><path d="M5 8 A11 11 0 1 1 5.5 18" fill="none" stroke="#6b6b6b" stroke-width="1.9"/><path d="M1 9 L5 13 L9 9" fill="#6b6b6b" stroke="#6b6b6b" stroke-width="1.5"/><path d="M15 7 V13 L19 16" fill="none" stroke="#6b6b6b" stroke-width="1.9"/></svg><div class="t" style="left:1048.5px;top:1198.17px;font-size:18.7px;color:#6b6b6b;">History</div><div class="a" style="left:1029px;top:1243px;width:98px;height:1px;background:#ececec;"></div><svg class="a" style="left:1065px;top:1284px;width:26px;height:26px" viewBox="0 0 26 26"><rect x="1" y="1" width="9" height="9" rx="1.5" fill="none" stroke="#6b6b6b" stroke-width="1.8"/><rect x="15" y="1" width="9" height="9" rx="1.5" fill="none" stroke="#6b6b6b" stroke-width="1.8"/><rect x="1" y="15" width="9" height="9" rx="1.5" fill="none" stroke="#6b6b6b" stroke-width="1.8"/><path d="M19.5 14 V25 M14 19.5 H25" stroke="#6b6b6b" stroke-width="1.8"/></svg><svg class="a" style="left:1174px;top:966px;width:22px;height:22px" viewBox="0 0 22 22"><path d="M11 0 V22 M0 11 H22" stroke="#3b3b3b" stroke-width="1.7"/></svg><div class="a" style="left:1213.5px;top:956.5px;width:396px;height:41px;background:#f9f9f9;border:1px solid #ececec;border-radius:6px"></div><svg class="a" style="left:1233px;top:965px;width:26px;height:24px" viewBox="0 0 26 24"><path d="M1 2 H25 M5 10 H21 M9 17 H17 M11 23 H15" stroke="#3b3b3b" stroke-width="1.8"/></svg><div class="a" style="left:1625.5px;top:973.5px;width:7px;height:7px;border-radius:50%;border:1.8px solid #3b3b3b"></div><div class="a" style="left:1634.5px;top:973.5px;width:7px;height:7px;border-radius:50%;border:1.8px solid #3b3b3b"></div><div class="a" style="left:1643.5px;top:973.5px;width:7px;height:7px;border-radius:50%;border:1.8px solid #3b3b3b"></div><div class="a" style="left:1150px;top:1012.5px;width:522px;height:48px;background:#f0f0f0;"></div><svg class="a" style="left:1177px;top:1031px;width:16px;height:11px" viewBox="0 0 16 11"><path d="M1 1.5 L8 9 L15 1.5" fill="none" stroke="#212121" stroke-width="1.9"/></svg><div class="t" style="left:1214px;top:1026.73px;font-size:20.4px;color:#212121;">DRF</div><div class="t" style="left:1214px;top:1077.04px;font-size:22.4px;color:#6b6b6b;">This collection is empty</div><div class="t" style="left:1214px;top:1108.37px;font-size:22.6px;color:#6b6b6b;"><span style="color:#3e6ad3">Add a request</span>  to start working.</div><div class="a" style="left:1672px;top:942px;width:1px;height:858px;background:#ececec;"></div><div class="a" style="left:1673px;top:870px;width:1207px;height:930px;background:#ffffff;"></div><svg class="a" style="left:1788px;top:892px;width:24px;height:25px" viewBox="0 0 24 25"><path d="M3 1.5 H21 M1.5 6.5 H22.5 L20 23.5 H4 Z" fill="none" stroke="#a6a6a6" stroke-width="1.9" stroke-linejoin="round"/></svg><div class="t" style="left:1822px;top:895.41px;font-size:19.6px;color:#8a8a8a;font-style:italic">DRF</div><div class="a" style="left:1972px;top:892px;width:1px;height:29px;background:#e6e6e6;"></div><div class="t" style="left:1988.5px;top:898.29px;font-size:15.6px;color:#2f7d3a;font-weight:bold;">GET</div><div class="t" style="left:2026.5px;top:893.22px;font-size:21.6px;color:#3b3b3b;width:213px;overflow:hidden;-webkit-mask-image:linear-gradient(90deg,#000 185px,transparent 213px)">http://localhost:8000/de</div><div class="a" style="left:2248px;top:899px;width:13px;height:13px;border-radius:50%;background:#e8703f"></div><div class="a" style="left:1988px;top:939.5px;width:271px;height:2.5px;background:#e8703f;"></div><div class="a" style="left:2274px;top:892px;width:1px;height:29px;background:#e6e6e6;"></div><svg class="a" style="left:2299px;top:894px;width:22px;height:22px" viewBox="0 0 22 22"><path d="M11 0 V22 M0 11 H22" stroke="#3b3b3b" stroke-width="1.7"/></svg><div class="a" style="left:1673px;top:940px;width:1207px;height:2px;background:#ececec;"></div><div class="a" style="left:1700px;top:962px;width:44px;height:44px;background:#f5f5f5;border:1px solid #ececec;border-radius:8px"></div><svg class="a" style="left:1706px;top:969px;width:32px;height:30px" viewBox="0 0 32 30"><path d="M1 5 H28 M24 1.5 L28 5" fill="none" stroke="#3d8396" stroke-width="1.6"/><path d="M4 25 H31 M4 25 L8 28.5" fill="none" stroke="#3d8396" stroke-width="1.6"/><text x="1.6" y="20.6" font-family="Liberation Sans" font-size="14.5" fill="#3d8396" stroke="#3d8396" stroke-width="0.35" textLength="28" lengthAdjust="spacingAndGlyphs">HTTP</text></svg><div class="t" style="left:1757.5px;top:971.52px;font-size:23.6px;color:#212121;-webkit-text-stroke:0.55px #212121">http://localhost:8000/demo/v1/123</div><div class="a" style="left:1700px;top:1039px;width:1300px;height:72px;border:1.5px solid #d0d0d0;border-radius:10px;background:#fff"></div><div class="t" style="left:1721px;top:1064.89px;font-size:20.8px;color:#2f7d3a;font-weight:bold;">GET</div><svg class="a" style="left:1847px;top:1071px;width:16px;height:10px" viewBox="0 0 16 10"><path d="M1 1.5 L8 8.5 L15 1.5" fill="none" stroke="#3b3b3b" stroke-width="1.8"/></svg><div class="a" style="left:1894px;top:1055px;width:1.5px;height:40px;background:#e6e6e6;"></div><div class="t" style="left:1918px;top:1063.12px;font-size:22.9px;color:#212121;">http://localhost:8000/demo/v1/123</div><div class="t" style="left:1702px;top:1141.22px;font-size:21px;color:#6b6b6b;">Params</div><div class="t" style="left:1817.5px;top:1139.95px;font-size:22.5px;color:#6b6b6b;">Authorization</div><div class="t" style="left:1993px;top:1140.12px;font-size:22.3px;color:#6b6b6b;">Headers <span style="color:#207a39">(8)</span></div><div class="t" style="left:2160.5px;top:1140.12px;font-size:22.3px;color:#212121;">Body</div><div class="a" style="left:2218px;top:1147px;width:10px;height:10px;border-radius:50%;background:#4eb45d"></div><div class="a" style="left:2160px;top:1177px;width:68px;height:3px;background:#e8703f;"></div><div class="t" style="left:2270.5px;top:1140.12px;font-size:22.3px;color:#6b6b6b;">Pre-request Script</div><div class="t" style="left:2495px;top:1140.12px;font-size:22.3px;color:#6b6b6b;">Tests</div><div class="t" style="left:2591px;top:1140.12px;font-size:22.3px;color:#6b6b6b;">Settings</div><div class="a" style="left:1715px;top:1203.0px;width:21px;height:21px;border-radius:50%;border:1.2px solid #a6a6a6;background:#fff"></div><div class="t" style="left:1746px;top:1202.62px;font-size:22.3px;color:#212121;">none</div><div class="a" style="left:1822px;top:1203.0px;width:21px;height:21px;border-radius:50%;border:1.2px solid #a6a6a6;background:#fff"></div><div class="t" style="left:1853px;top:1202.62px;font-size:22.3px;color:#212121;">form-data</div><div class="a" style="left:1980px;top:1203.0px;width:21px;height:21px;border-radius:50%;border:1.2px solid #a6a6a6;background:#fff"></div><div class="t" style="left:2010px;top:1201.86px;font-size:23.2px;color:#212121;">x-www-form-urlencoded</div><div class="a" style="left:2286px;top:1203.0px;width:21px;height:21px;border-radius:50%;border:5px solid #3e6ad3;background:#fff"></div><div class="t" style="left:2316.5px;top:1202.62px;font-size:22.3px;color:#212121;">raw</div><div class="a" style="left:2381px;top:1203.0px;width:21px;height:21px;border-radius:50%;border:1.2px solid #a6a6a6;background:#fff"></div><div class="t" style="left:2411px;top:1202.62px;font-size:22.3px;color:#212121;">binary</div><div class="a" style="left:2500px;top:1203.0px;width:21px;height:21px;border-radius:50%;border:1.2px solid #a6a6a6;background:#fff"></div><div class="t" style="left:2531px;top:1202.62px;font-size:22.3px;color:#212121;">GraphQL</div><div class="t" style="left:2651px;top:1203.30px;font-size:21.5px;color:#3e6ad3;font-weight:bold;">JSON</div><svg class="a" style="left:2731px;top:1210px;width:16px;height:10px" viewBox="0 0 16 10"><path d="M1 1.5 L8 8.5 L15 1.5" fill="none" stroke="#3e6ad3" stroke-width="1.8"/></svg><div class="a" style="left:1687px;top:1265px;width:1300px;height:600px;border:1px solid #ececec;border-radius:8px;background:#fff"></div><div class="a" style="left:1787px;top:1266px;width:1200px;height:32px;background:#ffffff;border-top:2.5px solid #e8e8e8;border-bottom:2.5px solid #e8e8e8"></div><div class="t m" style="left:1740px;top:1272.79px;font-size:20.5px;color:#1c2f7a;">1</div><div class="a" style="left:1787px;top:1266px;width:12px;height:32px;background:#e4e6e1;border:1px solid #b8b8b8"></div><div class="a" style="left:2256px;top:1266px;width:13px;height:32px;background:#e8e8e8;border:1px solid #b8b8b8"></div><div class="t m" style="left:1788px;top:1272.79px;font-size:20.5px;color:#000000;">{<span style="color:#a0382a">"username"</span>:<span style="color:#cfcfcf">·</span><span style="color:#5a5aa0">"    "</span>,<span style="color:#cfcfcf">·</span><span style="color:#a0382a">"passwoed"</span>:<span style="color:#cfcfcf">·</span><span style="color:#2a55b8">"123"</span>}</div><svg class="a" style="left:1962px;top:1271px;width:24px;height:21px" viewBox="0 0 24 21"><path d="M1.5 2.5 H8.5 V7.5 H2.5 V12.5 H9 V17.5 Q9 19.5 6.5 19 M13.5 1 V18.5 L18 17 M20 2 L14 8.5 M11 10.5 H22.5 M15 12 L22.5 19.5" fill="none" stroke="#5a5aa0" stroke-width="1.3"/></svg><svg class="a" style="left:1985px;top:1271px;width:22px;height:21px" viewBox="0 0 22 21"><path d="M3.5 4 H17.5 M4.5 10.5 H16.5 M1.5 17.5 H19.5" fill="none" stroke="#5a5aa0" stroke-width="1.3"/></svg></body></html>
